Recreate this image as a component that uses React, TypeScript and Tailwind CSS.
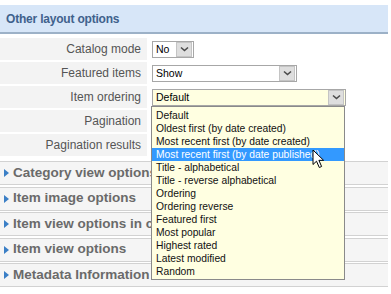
import React from 'react';

const font = { fontFamily: '"Liberation Sans", Arial, sans-serif' };

const orderingOptions = [
  'Default',
  'Oldest first (by date created)',
  'Most recent first (by date created)',
  'Most recent first (by date published)',
  'Title - alphabetical',
  'Title - reverse alphabetical',
  'Ordering',
  'Ordering reverse',
  'Featured first',
  'Most popular',
  'Highest rated',
  'Latest modified',
  'Random',
];

const sections = [
  'Category view options',
  'Item image options',
  'Item view options in category listings',
  'Item view options',
  'Metadata Information',
];

const Chevron = () => (
  <svg width="9" height="6" viewBox="0 0 9 6">
    <path d="M1 1.5 L4.5 4.5 L8 1.5" fill="none" stroke="#4a4a4a" strokeWidth="1.6" />
  </svg>
);

// fake windows-ish select box
const FakeSelect = ({ value, width, yellow }: { value: string; width: string; yellow?: boolean }) => (
  <div
    className={`${width} h-[17px] flex items-center border border-[#a7a7a7] ${yellow ? 'bg-[#ffffe1]' : 'bg-white'}`}
  >
    <span className="flex-1 pl-[3px] text-[10.5px] text-black leading-none">{value}</span>
    <div className="w-[16px] h-[15px] mr-[1px] flex items-center justify-center bg-[#dedede] border border-[#c4c4c4]">
      <Chevron />
    </div>
  </div>
);

const Row = ({ label, children }: { label: string; children: React.ReactNode }) => (
  <div className="flex h-[22px] mb-[2px]">
    <div className="w-[147px] bg-[#f3f3f3] flex items-center justify-end pr-[6px] text-[12px] text-[#555]">
      {label}
    </div>
    <div className="flex-1 flex items-center pl-[5px]">{children}</div>
  </div>
);

const Cursor = () => (
  <svg width="13" height="20" viewBox="0 0 13 20">
    <path
      d="M1 1 L1 15.5 L4.5 12.2 L7.3 18.5 L9.6 17.5 L6.9 11.3 L11.6 11.3 Z"
      fill="white"
      stroke="black"
      strokeWidth="1"
      strokeLinejoin="round"
    />
  </svg>
);

export default function App() {
  return (
    <div className="w-[391px] h-[294px] bg-white overflow-hidden relative" style={font}>
      <div className="w-[388px] pt-[5px]">
        {/* header */}
        <div className="h-[29px] bg-[#d7e6f8] border-b-2 border-[#9cb1c7] flex items-center pl-[6px]">
          <span className="text-[12px] font-bold tracking-[-0.2px] text-[#40618c]">Other layout options</span>
        </div>

        <div className="mt-[4px]">
          <Row label="Catalog mode">
            <FakeSelect value="No" width="w-[42px]" />
          </Row>
          <Row label="Featured items">
            <FakeSelect value="Show" width="w-[145px]" />
          </Row>
          <Row label="Item ordering">
            <FakeSelect value="Default" width="w-[194px]" yellow />
          </Row>
          <Row label="Pagination">
            <span />
          </Row>
          <Row label="Pagination results">
            <span />
          </Row>
        </div>

        {/* collapsed panels */}
        <div className="mt-[5px]">
          {sections.map(s => (
            <div
              key={s}
              className="h-[24px] mb-[1.5px] bg-[#f5f5f5] border-t border-b border-[#d2d2d2] flex items-center pl-[4px] whitespace-nowrap overflow-hidden"
            >
              <svg width="5" height="8" viewBox="0 0 5 8" className="mr-[4px]">
                <path d="M0 0 L5 4 L0 8 Z" fill="#3b7fc6" />
              </svg>
              <span className="text-[13.5px] font-bold text-[#6a6a6a]">{s}</span>
            </div>
          ))}
        </div>
      </div>

      {/* open dropdown list */}
      <div className="absolute left-[151px] top-[106px] w-[194px] bg-[#ffffe1] border border-[#8a8a8a] pt-[2px] pb-[1px]">
        {orderingOptions.map((o, i) => (
          <div
            key={o}
            className={`h-[13px] leading-[13px] pl-[4px] text-[10.3px] whitespace-nowrap overflow-hidden ${
              i === 3 ? 'bg-[#3399ff] text-white' : 'text-[#111]'
            }`}
          >
            {o}
          </div>
        ))}
      </div>

      <div className="absolute left-[312px] top-[149px]">
        <Cursor />
      </div>
    </div>
  );
}
